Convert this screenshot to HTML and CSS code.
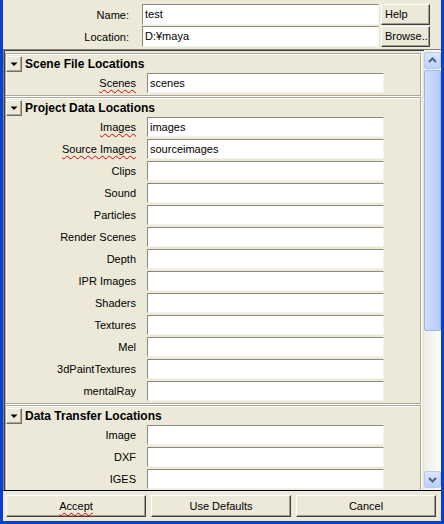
FILE: index.html
```html
<!DOCTYPE html>
<html>
<head>
<meta charset="utf-8">
<link rel="stylesheet" href="styles.css">
</head>
<body>
<div class="window">
  <div class="topform">
    <span class="tlabel">Name:</span><div class="field top">test</div><div class="btn help">Help</div>
    <span class="tlabel">Location:</span><div class="field top">D:¥maya</div><div class="btn browse">Browse..</div>
  </div>
  <div class="scrollarea">
    <div class="content">
      <section class="frame">
        <div class="fhead"><span class="toggle"><svg width="14" height="14" viewBox="0 0 14 14"><polygon points="3.5,5.5 10.5,5.5 7,9" fill="#000"/></svg></span><span class="ftitle">Scene File Locations</span></div>
        <div class="row"><span class="lbl"><span class="sp">Scenes</span></span><div class="field">scenes</div></div>
      </section>
      <section class="frame">
        <div class="fhead"><span class="toggle"><svg width="14" height="14" viewBox="0 0 14 14"><polygon points="3.5,5.5 10.5,5.5 7,9" fill="#000"/></svg></span><span class="ftitle">Project Data Locations</span></div>
        <div class="row"><span class="lbl"><span class="sp">Images</span></span><div class="field">images</div></div>
        <div class="row"><span class="lbl"><span class="sp">Source Images</span></span><div class="field">sourceimages</div></div>
        <div class="row"><span class="lbl">Clips</span><div class="field"></div></div>
        <div class="row"><span class="lbl">Sound</span><div class="field"></div></div>
        <div class="row"><span class="lbl">Particles</span><div class="field"></div></div>
        <div class="row"><span class="lbl">Render Scenes</span><div class="field"></div></div>
        <div class="row"><span class="lbl">Depth</span><div class="field"></div></div>
        <div class="row"><span class="lbl">IPR Images</span><div class="field"></div></div>
        <div class="row"><span class="lbl">Shaders</span><div class="field"></div></div>
        <div class="row"><span class="lbl">Textures</span><div class="field"></div></div>
        <div class="row"><span class="lbl">Mel</span><div class="field"></div></div>
        <div class="row"><span class="lbl">3dPaintTextures</span><div class="field"></div></div>
        <div class="row"><span class="lbl">mentalRay</span><div class="field"></div></div>
      </section>
      <section class="frame">
        <div class="fhead"><span class="toggle"><svg width="14" height="14" viewBox="0 0 14 14"><polygon points="3.5,5.5 10.5,5.5 7,9" fill="#000"/></svg></span><span class="ftitle">Data Transfer Locations</span></div>
        <div class="row"><span class="lbl">Image</span><div class="field"></div></div>
        <div class="row"><span class="lbl">DXF</span><div class="field"></div></div>
        <div class="row"><span class="lbl">IGES</span><div class="field"></div></div>
      </section>
    </div>
    <div class="vscroll">
      <div class="sbtn"><svg width="15" height="15" viewBox="0 0 15 15"><polyline points="4,9 7.5,5.5 11,9" fill="none" stroke="#4D6185" stroke-width="2"/></svg></div>
      <div class="thumb"></div>
      <div class="track"></div>
      <div class="sbtn"><svg width="15" height="15" viewBox="0 0 15 15"><polyline points="4,6 7.5,9.5 11,6" fill="none" stroke="#4D6185" stroke-width="2"/></svg></div>
    </div>
  </div>
  <div class="actions">
    <div class="btn big"><span class="sp">Accept</span></div>
    <div class="btn big">Use Defaults</div>
    <div class="btn big">Cancel</div>
  </div>
</div>
</body>
</html>
```

FILE: styles.css
```css
* { box-sizing: border-box; }
html, body { margin: 0; padding: 0; }
body {
  background: #ECE9D8;
  font-family: "Liberation Sans", Arial, sans-serif;
  font-size: 11px;
  color: #000;
}
.window {
  width: 444px;
  height: 524px;
  border-left: 3px solid #0A3FD0;
  border-right: 3px solid #0A3FD0;
  border-bottom: 3px solid #0841D0;
  background: #ECE9D8;
  display: flex;
  flex-direction: column;
  overflow: hidden;
}
.topform {
  display: grid;
  grid-template-columns: 139px 237px auto;
  row-gap: 1px;
  padding-top: 4px;
  align-items: center;
  justify-items: start;
}
.tlabel {
  justify-self: stretch;
  text-align: right;
  padding-right: 13px;
}
.field {
  width: 237px;
  height: 20px;
  background: #fff;
  border-top: 1px solid #8C8A80;
  border-left: 1px solid #8C8A80;
  border-bottom: 1px solid #F4F3EE;
  border-right: 1px solid #F4F3EE;
  padding: 0 2px;
  line-height: 18px;
  white-space: nowrap;
}
.field.top { height: 21px; line-height: 19px; }
.btn {
  background: #ECE9D8;
  border: 1px solid;
  border-color: #fff #404040 #404040 #fff;
  box-shadow: inset -1px -1px 0 #A09E92;
  white-space: nowrap;
}
.help, .browse {
  margin-left: 2px;
  height: 21px;
  line-height: 19px;
  padding-left: 3px;
}
.help { width: 49px; }
.browse { width: 49px; }
.scrollarea {
  margin-top: 2px;
  height: 442px;
  border-top: 1px solid #808080;
  border-left: 1px solid #808080;
  border-bottom: 1px solid #000;
  box-shadow: inset 1px 1px 0 #404040;
  display: flex;
  overflow: hidden;
}
.content {
  flex: 1;
  padding: 3px 3px 0 1px;
  overflow: hidden;
}
.frame {
  border: 1px solid #ACA899;
  box-shadow: inset 1px 1px 0 #fff, 1px 1px 0 #fff;
  margin-bottom: 1px;
}
.fhead {
  height: 19px;
  display: flex;
  align-items: flex-start;
  padding-top: 2px;
}
.toggle {
  width: 16px;
  height: 16px;
  display: flex;
  align-items: center;
  justify-content: center;
  border: 1px solid;
  border-color: #fff #716F64 #716F64 #fff;
  box-shadow: inset -1px -1px 0 #ACA899;
}
.ftitle {
  font-weight: bold;
  font-size: 12px;
  margin-left: 3px;
  line-height: 16px;
}
.row {
  display: grid;
  grid-template-columns: 131px 237px;
  column-gap: 10px;
  align-items: center;
  height: 20px;
  margin-bottom: 2px;
}
.lbl {
  text-align: right;
  padding-right: 1px;
  white-space: nowrap;
}
.sp {
  text-decoration: underline wavy #E00000;
  text-decoration-thickness: 1px;
  text-underline-offset: 2px;
}
.vscroll {
  width: 17px;
  display: flex;
  flex-direction: column;
  padding: 2px 0;
  background: linear-gradient(to right, #EEEDE5, #FCFCFA);
}
.sbtn {
  width: 17px;
  height: 17px;
  border: 1px solid #B4C8F6;
  border-radius: 2px;
  background: linear-gradient(to bottom, #DCE6FE, #BCCFFA);
  display: flex;
  align-items: center;
  justify-content: center;
}
.thumb {
  height: 261px;
  margin-top: 1px;
  border: 1px solid #9DB5F1;
  border-radius: 2px;
  background: linear-gradient(to right, #CFDCFD, #B8CBF9);
}
.track { flex: 1; }
.actions {
  display: grid;
  grid-template-columns: repeat(3, 140px);
  column-gap: 5px;
  padding: 4px 0 0 3px;
}
.btn.big {
  height: 22px;
  line-height: 20px;
  text-align: center;
}
```
